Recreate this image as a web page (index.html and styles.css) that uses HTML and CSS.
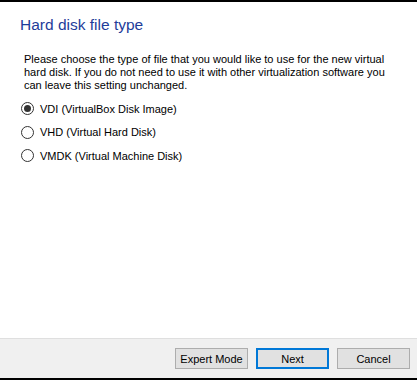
FILE: index.html
```html
<!DOCTYPE html>
<html>
<head>
<meta charset="utf-8">
<link rel="stylesheet" href="styles.css">
</head>
<body>
<div class="window">
  <div class="content">
    <h1 class="title">Hard disk file type</h1>
    <p class="desc">Please choose the type of file that you would like to use for the new virtual hard disk. If you do not need to use it with other virtualization software you can leave this setting unchanged.</p>
    <div class="options">
      <label class="option"><span class="radio checked"></span><span>VDI (VirtualBox Disk Image)</span></label>
      <label class="option"><span class="radio"></span><span>VHD (Virtual Hard Disk)</span></label>
      <label class="option"><span class="radio"></span><span>VMDK (Virtual Machine Disk)</span></label>
    </div>
  </div>
  <div class="footer">
    <button class="btn">Expert Mode</button>
    <button class="btn default">Next</button>
    <button class="btn">Cancel</button>
  </div>
</div>
</body>
</html>
```
FILE: styles.css
```css
html, body {
  margin: 0;
  padding: 0;
  background: #ffffff;
}
.window {
  width: 417px;
  height: 380px;
  box-sizing: border-box;
  border-top: 2px solid #000;
  border-bottom: 2px solid #000;
  display: flex;
  flex-direction: column;
  font-family: "Liberation Sans", Arial, sans-serif;
  font-size: 11px;
  color: #000;
}
.content {
  flex: 1;
  background: #fff;
  padding: 0 20px 0 20px;
}
.title {
  margin: 13px 0 0 0;
  font-weight: normal;
  font-size: 15.5px;
  line-height: 20px;
  color: #1e3c9a;
}
.desc {
  margin: 18px 0 0 4px;
  line-height: 13px;
  width: 372px;
}
.options {
  margin: 10px 0 0 1px;
  display: flex;
  flex-direction: column;
  gap: 10.5px;
}
.option {
  display: flex;
  align-items: center;
  height: 13px;
  gap: 6px;
}
.radio {
  width: 13px;
  height: 13px;
  box-sizing: border-box;
  border: 1px solid #333;
  border-radius: 50%;
  background: #fff;
  display: flex;
  align-items: center;
  justify-content: center;
}
.radio.checked::after {
  content: "";
  width: 7px;
  height: 7px;
  border-radius: 50%;
  background: #333;
}
.footer {
  height: 39px;
  background: #f0f0f0;
  border-top: 1px solid #dfdfdf;
  display: flex;
  justify-content: flex-end;
  align-items: center;
  gap: 8px;
  padding: 0 7px 0 0;
}
.btn {
  width: 73px;
  height: 21px;
  box-sizing: border-box;
  background: #e1e1e1;
  border: 1px solid #adadad;
  font-family: "Liberation Sans", Arial, sans-serif;
  font-size: 11px;
  color: #000;
  padding: 0;
  margin: 0;
}
.btn.default {
  border: 2px solid #0078d7;
}
```
